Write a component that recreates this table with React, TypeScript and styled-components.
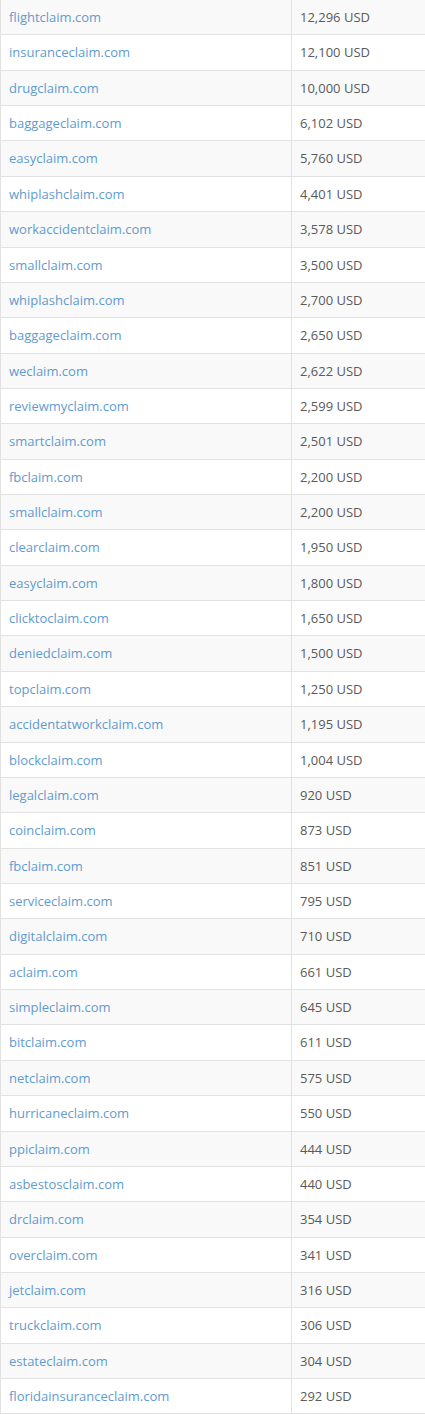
import React from 'react';
import styled, { createGlobalStyle } from 'styled-components';

const rows: [string, string][] = [
  ['flightclaim.com', '12,296 USD'],
  ['insuranceclaim.com', '12,100 USD'],
  ['drugclaim.com', '10,000 USD'],
  ['baggageclaim.com', '6,102 USD'],
  ['easyclaim.com', '5,760 USD'],
  ['whiplashclaim.com', '4,401 USD'],
  ['workaccidentclaim.com', '3,578 USD'],
  ['smallclaim.com', '3,500 USD'],
  ['whiplashclaim.com', '2,700 USD'],
  ['baggageclaim.com', '2,650 USD'],
  ['weclaim.com', '2,622 USD'],
  ['reviewmyclaim.com', '2,599 USD'],
  ['smartclaim.com', '2,501 USD'],
  ['fbclaim.com', '2,200 USD'],
  ['smallclaim.com', '2,200 USD'],
  ['clearclaim.com', '1,950 USD'],
  ['easyclaim.com', '1,800 USD'],
  ['clicktoclaim.com', '1,650 USD'],
  ['deniedclaim.com', '1,500 USD'],
  ['topclaim.com', '1,250 USD'],
  ['accidentatworkclaim.com', '1,195 USD'],
  ['blockclaim.com', '1,004 USD'],
  ['legalclaim.com', '920 USD'],
  ['coinclaim.com', '873 USD'],
  ['fbclaim.com', '851 USD'],
  ['serviceclaim.com', '795 USD'],
  ['digitalclaim.com', '710 USD'],
  ['aclaim.com', '661 USD'],
  ['simpleclaim.com', '645 USD'],
  ['bitclaim.com', '611 USD'],
  ['netclaim.com', '575 USD'],
  ['hurricaneclaim.com', '550 USD'],
  ['ppiclaim.com', '444 USD'],
  ['asbestosclaim.com', '440 USD'],
  ['drclaim.com', '354 USD'],
  ['overclaim.com', '341 USD'],
  ['jetclaim.com', '316 USD'],
  ['truckclaim.com', '306 USD'],
  ['estateclaim.com', '304 USD'],
  ['floridainsuranceclaim.com', '292 USD'],
];

const GlobalStyle = createGlobalStyle`
  body {
    margin: 0;
    background: #fff;
    font-family: "Open Sans", "Liberation Sans", sans-serif;
    font-size: 13px;
    color: #5a5a5a;
    overflow: hidden;
  }
`;

const Table = styled.table`
  width: 425px;
  margin-top: -1px;
  border-collapse: collapse;
  table-layout: fixed;
`;

const Col = styled.col<{ $width: number }>`
  width: ${(p) => p.$width}px;
`;

const Row = styled.tr<{ $striped: boolean }>`
  background: ${(p) => (p.$striped ? '#f9f9f9' : '#fff')};
`;

const Cell = styled.td`
  padding: 8px;
  line-height: 18.36px;
  border: 1px solid #e2e2e2;
  vertical-align: top;
  white-space: nowrap;
  overflow: hidden;
`;

const DomainLink = styled.a`
  color: #5f9bd0;
  text-decoration: none;
`;

export default function App() {
  return (
    <>
      <GlobalStyle />
      <Table>
        <colgroup>
          <Col $width={291} />
          <Col $width={134} />
        </colgroup>
        <tbody>
          {rows.map(([domain, price], i) => (
            <Row key={i} $striped={i % 2 === 0}>
              <Cell>
                <DomainLink href="#">{domain}</DomainLink>
              </Cell>
              <Cell>{price}</Cell>
            </Row>
          ))}
        </tbody>
      </Table>
    </>
  );
}
